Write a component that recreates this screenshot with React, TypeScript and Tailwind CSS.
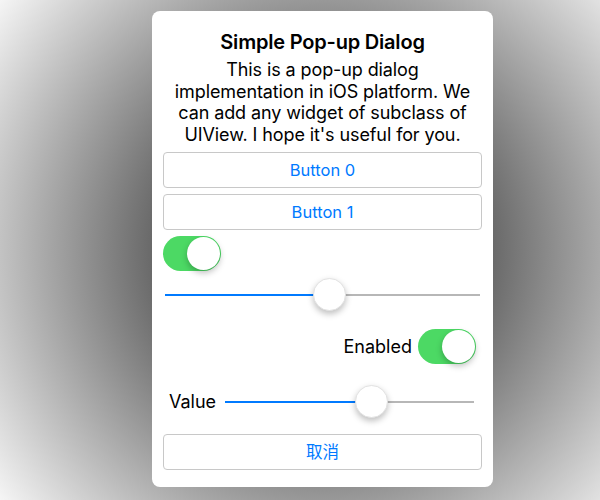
import React from "react";

function Switch() {
  return (
    <div className="relative w-[58px] h-[35px] rounded-full bg-[#4cd964] shrink-0">
      <div className="absolute right-[1px] top-[1px] w-[33px] h-[33px] rounded-full bg-white shadow-[0_3px_6px_rgba(0,0,0,0.25)]" />
    </div>
  );
}

function Slider({ pct }: { pct: number }) {
  return (
    <div className="relative h-[33px] flex-1 flex items-center">
      <div className="h-[2px] w-full bg-[#b7b7b7] relative">
        <div className="absolute left-0 top-0 h-[2px] bg-[#007aff]" style={{ width: `${pct}%` }} />
      </div>
      <div
        className="absolute top-0 w-[33px] h-[33px] rounded-full bg-white border border-[#e2e2e2] shadow-[0_3px_6px_rgba(0,0,0,0.25)]"
        style={{ left: `calc(${pct}% - 16px)` }}
      />
    </div>
  );
}

export default function App() {
  return (
    <div
      className="w-[600px] h-[500px] pl-[152px] pt-[11px]"
      style={{ background: "radial-gradient(circle at 322px 250px, #050505 0px, #ffffff 424px)", fontFamily: "Inter, 'Noto Sans CJK SC', sans-serif" }}
    >
      <div className="w-[341px] h-[476px] bg-white rounded-[8px] flex flex-col px-[11px] pt-[19px]">
        <div className="text-center text-[20px] leading-[24px] font-semibold text-black tracking-[-0.2px]">Simple Pop-up Dialog</div>
        <div className="mt-[5px] px-[10px] text-center text-[18px] leading-[21.5px] text-black tracking-[-0.1px]">
          This is a pop-up dialog implementation in iOS platform. We can add any widget of subclass of UIView. I hope it's useful for you.
        </div>
        <button className="mt-[7px] h-[36px] w-full rounded-[4px] border border-[#c8c8c8] text-[#007aff] text-[16.5px]">Button 0</button>
        <button className="mt-[6px] h-[36px] w-full rounded-[4px] border border-[#c8c8c8] text-[#007aff] text-[16.5px]">Button 1</button>
        <div className="mt-[6px]">
          <Switch />
        </div>
        <div className="mt-[7px] flex px-[2px]">
          <Slider pct={52} />
        </div>
        <div className="mt-[18px] flex items-center justify-end gap-[6px] pr-[6px]">
          <span className="text-[18px] text-black">Enabled</span>
          <Switch />
        </div>
        <div className="mt-[21px] flex items-center pl-[6px] pr-[8px] gap-[9px]">
          <span className="text-[18px] text-black">Value</span>
          <Slider pct={58.5} />
        </div>
        <button className="mt-[16px] h-[36px] w-full rounded-[4px] border border-[#c8c8c8] text-[#007aff] text-[16.5px]">取消</button>
      </div>
    </div>
  );
}
